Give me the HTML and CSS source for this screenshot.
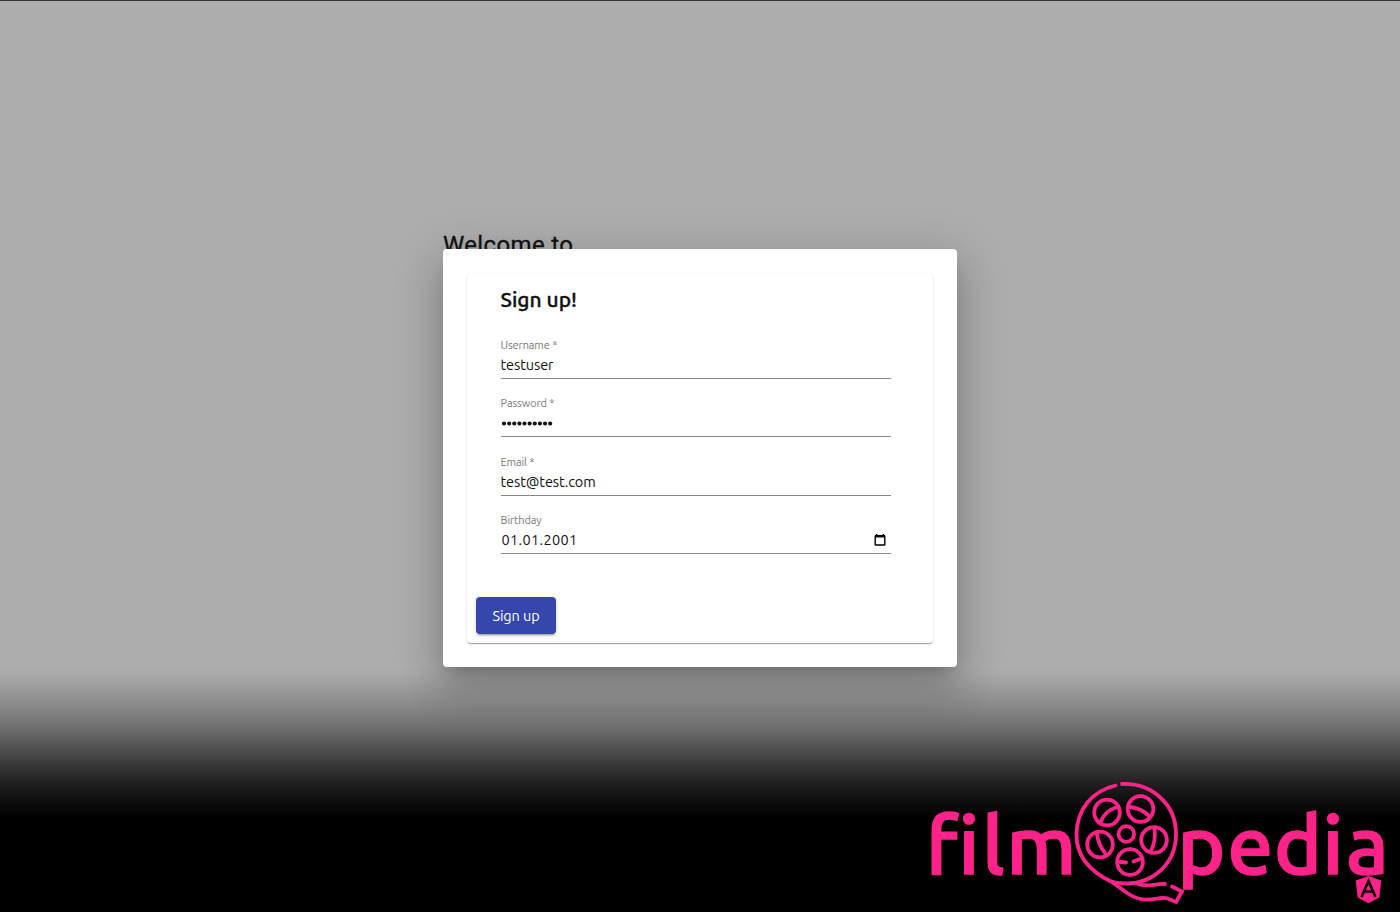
FILE: index.html
```html
<!DOCTYPE html>
<html lang="en">
<head>
<meta charset="utf-8">
<title>filmopedia</title>
<link rel="stylesheet" href="styles.css">
</head>
<body>
<main class="page">
  <h1 class="welcome">Welcome to</h1>
</main>
<div class="overlay">
  <section class="dialog">
    <form class="card">
      <h2 class="title">Sign up!</h2>
      <div class="fields">
        <div class="field"><span class="label">Username *</span><span class="value">testuser</span></div>
        <div class="field"><span class="label">Password *</span>
          <span class="value"><svg class="dots" viewBox="0 0 54 20"><path d="M3 10.500h0M8.130 10.500h0M13.260 10.500h0M18.390 10.500h0M23.520 10.500h0M28.650 10.500h0M33.780 10.500h0M38.910 10.500h0M44.040 10.500h0M49.170 10.500h0"/></svg></span></div>
        <div class="field"><span class="label">Email *</span><span class="value">test@test.com</span></div>
        <div class="field"><span class="label">Birthday</span>
          <span class="value date"><span>01.01.2001</span>
            <svg class="calendar" viewBox="0 0 12 12"><path fill-rule="evenodd" d="M2 0h1.500v1h5V0H10v1h.300q1.200 0 1.200 1.200v8.300q0 1.200-1.200 1.200H1.700Q.5 11.700.5 10.500V2.200Q.5 1 1.700 1H2zM1.900 3.600v6.700h8.200v-6.700z"/></svg>
          </span></div>
      </div>
      <button class="submit" type="button">Sign up</button>
    </form>
  </section>
</div>
<svg class="logo" viewBox="920 770 480 142" role="img" aria-label="filmopedia">
  <g class="wordmark">
    <text y="873.500" x="926 958.500 982 1006.500">film</text>
    <text y="873.500" x="1177.500 1227.500 1274 1322.500 1346">pedia</text>
  </g>
  <g class="reel">
    <path d="M1115.500 785.500C1092 791 1077 809 1076.500 834C1076 858 1093 873 1112 882L1127 893C1142 903 1152 899 1162 898C1168 897 1170 900 1176 902L1182 891.500L1172 886.500"/>
    <path d="M1122 784C1153 783 1176 805 1176 834C1176 864 1153 883 1127 883.500C1121 883.500 1117 883 1111 881.500M1137 883.500C1146 888 1154 883.500 1165 884"/>
    <circle cx="1126.300" cy="834" r="7.800"/>
    <circle cx="1107" cy="812.500" r="12.800"/>
    <circle cx="1140.500" cy="809" r="12.800"/>
    <circle cx="1100" cy="844.500" r="12.800"/>
    <circle cx="1154" cy="840" r="12.800"/>
    <circle cx="1130" cy="862" r="12.800"/>
    <path d="M1101 821Q1105 811 1116 807.500M1130 807Q1141 808 1149 816M1097 834Q1098 844 1105 853M1154.500 829Q1156 841 1151 851M1120 862L1126 862.500M1133.500 861.500L1140 859"/>
  </g>
  <path class="shield" d="M1368.500 876L1381.300 880.500L1379.300 897.500L1368.500 903.300L1357.700 897.500L1355.700 880.500Z"/>
  <path class="shield-mark" d="M1361.500 897L1368.500 881L1375.500 897M1364.500 891.500H1372.500"/>
</svg>
</body>
</html>
```
FILE: styles.css
```css
* { box-sizing: border-box; }
body { margin: 0; width: 1400px; height: 912px; position: relative; overflow: hidden; font-family: Ubuntu, "Noto Sans", sans-serif; color: #111; }
.page {
  height: 912px; padding: 229px 443px; border-top: 1px solid #383438;
  background: linear-gradient(#adadad 0, #adadad 664px, #a9a9a9 674px, #909090 699px, #6c6c6c 729px, #404040 759px, #242424 779px, #0f0f0f 799px, #000 817px);
}
.welcome { margin: 0; font: 400 24px/30px Roboto, sans-serif; letter-spacing: .35px; -webkit-text-stroke: .3px #111; white-space: nowrap; }
.overlay { position: absolute; inset: 0; padding-top: 249px; display: flex; justify-content: center; align-items: flex-start; }
.dialog {
  width: 514px; height: 418px; padding: 25px 24px 24px; background: #fff; border-radius: 4px;
  box-shadow: 0 11px 15px -7px rgba(0,0,0,.2), 0 24px 38px 3px rgba(0,0,0,.14), 0 9px 46px 8px rgba(0,0,0,.12);
}
.card {
  height: 369px; padding: 13px 9px 9px; display: flex; flex-direction: column; align-items: flex-start; border-radius: 4px; background: #fff;
  box-shadow: 0 2px 1px -1px rgba(0,0,0,.2), 0 1px 1px rgba(0,0,0,.14), 0 1px 3px rgba(0,0,0,.12);
}
.title { margin: 0 0 0 24.500px; font-size: 21px; line-height: 25px; font-weight: 500; -webkit-text-stroke: .35px #111; }
.fields { margin-left: 24.500px; width: 390.500px; padding-top: 26.300px; display: grid; gap: 17.150px; }
.field { height: 41px; border-bottom: 1px solid #888; display: flex; flex-direction: column; }
.label { font-size: 11px; line-height: 14px; letter-spacing: -.1px; color: #777; align-self: flex-start; }
.value { font-size: 14.500px; line-height: 20px; margin-top: 3px; height: 20px; align-self: stretch; letter-spacing: -.1px; }
.dots { display: block; width: 54px; height: 20px; fill: none; stroke: #111; stroke-width: 4.200; stroke-linecap: round; }
.date { display: flex; justify-content: space-between; align-items: center; padding: 0 5px 0 1px; letter-spacing: .35px; }
.calendar { width: 12px; height: 12px; }
.submit {
  margin-top: auto; width: 80px; height: 37px; padding: 0; border: 0; border-radius: 4px; background: #3547ac; color: #fff;
  font: 400 14.500px/37px Ubuntu, "Noto Sans", sans-serif; letter-spacing: -.1px;
  box-shadow: 0 3px 1px -2px rgba(0,0,0,.2), 0 2px 2px rgba(0,0,0,.14), 0 1px 5px rgba(0,0,0,.12);
}
.logo { position: absolute; right: 0; bottom: 0; width: 480px; height: 142px; }
.wordmark { font: 500 81px Ubuntu, "Noto Sans", sans-serif; font-variant-ligatures: none; fill: #ff2389; stroke: #ff2389; stroke-width: 1.700; }
.reel { fill: none; stroke: #ff2389; stroke-width: 3.800; stroke-linecap: round; stroke-linejoin: miter; }
.shield { fill: #ff2389; }
.shield-mark { fill: none; stroke: #000; stroke-width: 2.600; }
```
